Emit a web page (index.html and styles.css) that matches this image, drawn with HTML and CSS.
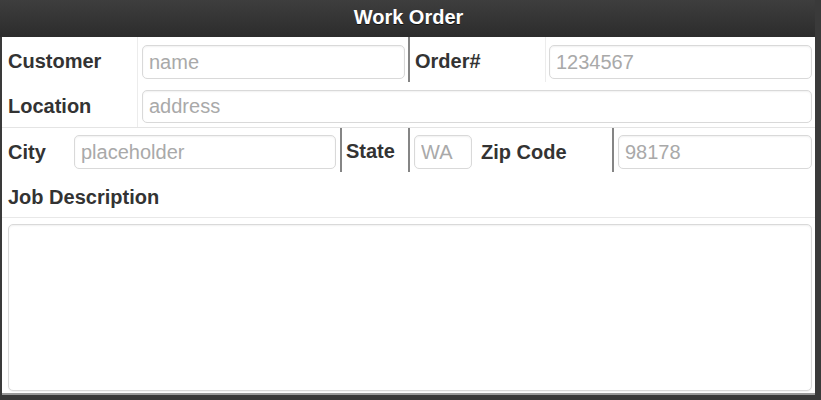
FILE: index.html
```html
<!DOCTYPE html>
<html>
<head>
<meta charset="utf-8">
<title>Work Order</title>
<link rel="stylesheet" href="styles.css">
</head>
<body>
<div class="frame">
  <div class="header">Work Order</div>
  <div class="row row-a">
    <div class="lbl lbl-main">Customer</div>
    <div class="cell cell-cust"><input class="field" type="text" placeholder="name"></div>
    <div class="lbl lbl-order">Order#</div>
    <div class="cell cell-order"><input class="field" type="text" placeholder="1234567"></div>
  </div>
  <div class="row row-b">
    <div class="lbl lbl-main">Location</div>
    <div class="cell cell-loc"><input class="field" type="text" placeholder="address"></div>
  </div>
  <div class="row row-c">
    <div class="lbl lbl-city">City</div>
    <div class="cell cell-city"><input class="field" type="text" placeholder="placeholder"></div>
    <div class="lbl lbl-state">State</div>
    <div class="cell cell-st"><input class="field" type="text" placeholder="WA"></div>
    <div class="lbl lbl-zip">Zip Code</div>
    <div class="cell cell-zip"><input class="field" type="text" placeholder="98178"></div>
  </div>
  <div class="row row-d">
    <div class="lbl lbl-job">Job Description</div>
  </div>
  <div class="desc-wrap"><textarea class="desc"></textarea></div>
</div>
</body>
</html>
```

FILE: styles.css
```css
html, body {
  margin: 0;
  padding: 0;
  height: 400px;
  overflow: hidden;
  background: #3a3a3a;
}

.frame {
  margin-left: 2px;
  width: 813px;
  height: 395px;
  background: #fff;
  border-bottom: 2px solid #9a9a9a;
  box-sizing: border-box;
  font-family: "Liberation Sans", Arial, sans-serif;
  color: #333;
}

.header {
  height: 37px;
  background: linear-gradient(#3e3e3e, #2c2c2c);
  color: #fff;
  font-weight: bold;
  font-size: 20px;
  line-height: 35px;
  text-align: center;
  text-shadow: 0 1px 0 #111;
  margin-left: -2px;
  padding-left: 2px;
}

.row {
  display: flex;
  box-sizing: border-box;
}

.row-a { height: 46px; }
.row-b { height: 45px; border-bottom: 1px solid #e4e4e4; }
.row-c { height: 46px; }
.row-d { height: 44px; border-bottom: 1px solid #e8e8e8; }

.lbl {
  display: flex;
  align-items: center;
  font-weight: bold;
  font-size: 20px;
  box-sizing: border-box;
  white-space: nowrap;
  padding-top: 3px;
}

.cell {
  box-sizing: border-box;
}

.field {
  display: block;
  box-sizing: border-box;
  height: 34px;
  margin: 0;
  border: 1px solid #d9d9d9;
  border-radius: 5px;
  box-shadow: inset 0 1px 2px rgba(0,0,0,0.06);
  font-family: "Liberation Sans", Arial, sans-serif;
  font-size: 20px;
  padding: 0 6px;
  color: #333;
  background: #fff;
  outline: none;
}

.field::placeholder { color: #a9a9a9; }

.lbl-main {
  width: 136px;
  padding-left: 6px;
  border-right: 1px solid #ececec;
}

.cell-cust { width: 270px; padding: 8px 3px 0 4px; }
.cell-cust .field { width: 263px; }

.lbl-order {
  width: 138px;
  padding-left: 5px;
  border-left: 2px solid #858585;
  border-right: 1px solid #ececec;
  margin-bottom: 1px;
}

.cell-order { width: 269px; padding: 8px 3px 0 3px; }
.cell-order .field { width: 263px; }

.cell-loc { flex: 1; padding: 7px 3px 0 4px; }
.cell-loc .field { width: 670px; height: 33px; }

.lbl-city { width: 72px; padding-left: 6px; }
.cell-city { width: 266px; padding: 7px 4px 0 0; }
.cell-city .field { width: 262px; }

.lbl-state {
  width: 68px;
  padding-left: 4px;
  border-left: 2px solid #858585;
  margin-bottom: 2px;
}

.cell-st {
  width: 68px;
  padding: 7px 4px 0 4px;
  border-left: 2px solid #858585;
  margin-bottom: 2px;
}
.cell-st .field { width: 58px; }

.lbl-zip { width: 136px; padding-left: 5px; }

.cell-zip {
  width: 203px;
  padding: 7px 3px 0 4px;
  border-left: 2px solid #858585;
  margin-bottom: 2px;
}
.cell-zip .field { width: 194px; }

.lbl-job { padding-left: 6px; }

.desc-wrap {
  padding: 6px 3px 0 6px;
}

.desc {
  display: block;
  box-sizing: border-box;
  width: 804px;
  height: 167px;
  margin: 0;
  border: 1px solid #d9d9d9;
  border-radius: 5px;
  box-shadow: inset 0 1px 2px rgba(0,0,0,0.06), 0 1px 1px rgba(0,0,0,0.05);
  resize: none;
  outline: none;
  font-family: "Liberation Sans", Arial, sans-serif;
  font-size: 20px;
}
```
